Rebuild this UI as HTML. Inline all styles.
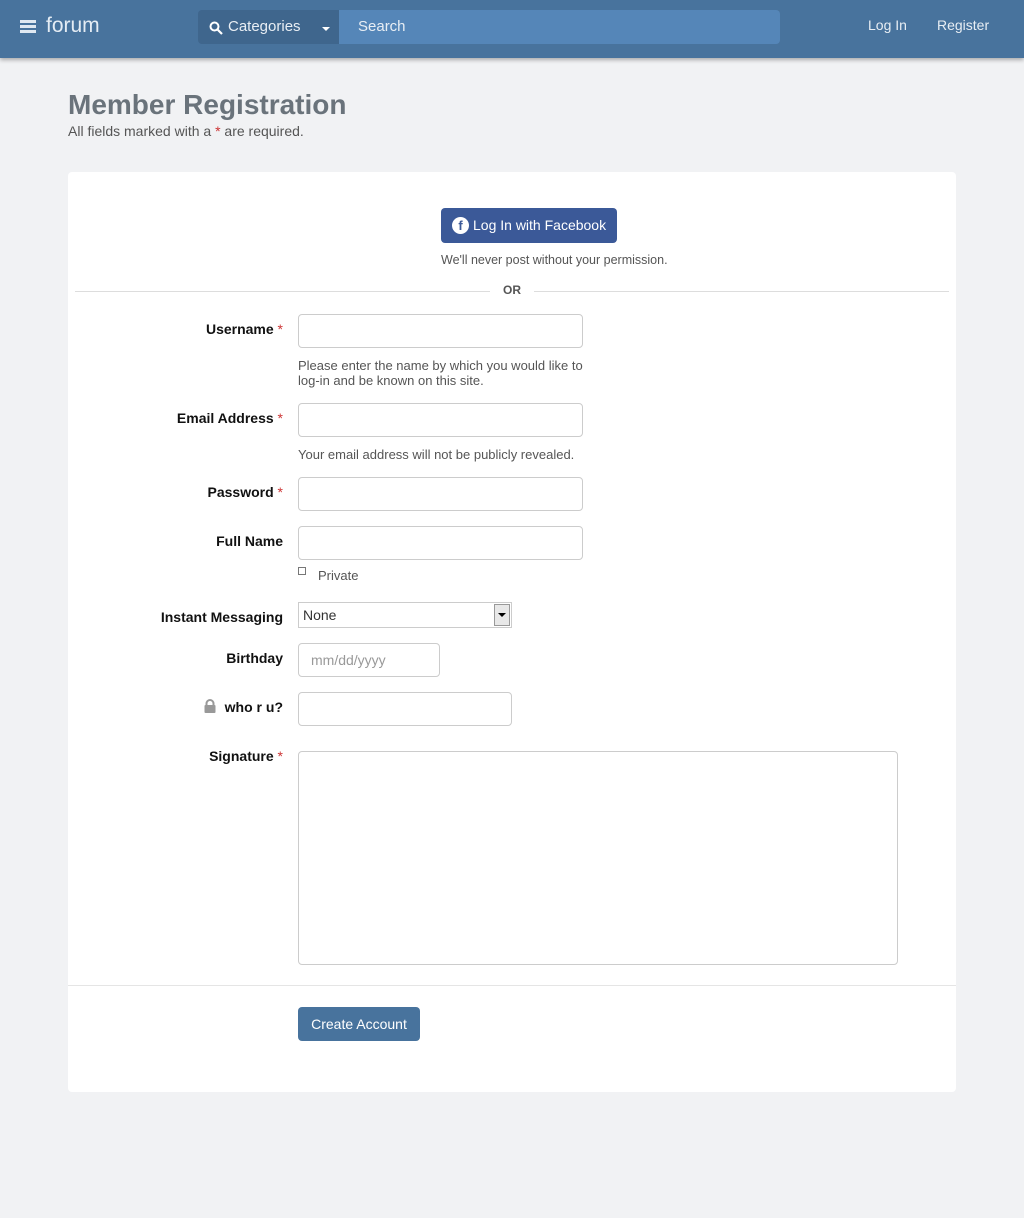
<!DOCTYPE html>
<html><head><style>
*{box-sizing:border-box;margin:0;padding:0}
body{width:1024px;height:1218px;background:#f1f2f4;font-family:"Liberation Sans",sans-serif;position:relative;overflow:hidden}
.nav{position:absolute;left:0;top:0;width:1024px;height:58px;background:#48739d;box-shadow:0 2px 4px rgba(0,0,0,.3)}
.abs{position:absolute}
.lbl{position:absolute;right:741px;font-size:14px;font-weight:bold;color:#111;text-align:right;white-space:nowrap}
.req{color:#c33;font-weight:normal}
.inp{position:absolute;left:298px;height:34px;background:#fff;border:1px solid #ccc;border-radius:4px}
.hint{position:absolute;left:298px;font-size:13px;color:#555;line-height:15px}
</style></head><body>
<div class="nav">
 <div class="abs" style="left:20px;top:20px;width:16px;height:3px;background:#dfe8f1;box-shadow:0 5px 0 #dfe8f1,0 10px 0 #dfe8f1"></div>
 <div class="abs" style="left:46px;top:14px;font-size:21px;color:#e4ecf4">forum</div>
 <div class="abs" style="left:198px;top:10px;width:141px;height:34px;background:#3f668d;border-radius:4px 0 0 4px"></div>
 <svg class="abs" style="left:209px;top:21px" width="14" height="14"><circle cx="5.5" cy="5.5" r="4" stroke="#fff" stroke-width="2" fill="none"/><path d="M8.5 8.5L13 13" stroke="#fff" stroke-width="2.2"/></svg>
 <div class="abs" style="left:228px;top:18px;font-size:15px;color:#e8eef4">Categories</div>
 <div class="abs" style="left:322px;top:27px;border:4px solid transparent;border-top-color:#fff;border-bottom:0"></div>
 <div class="abs" style="left:339px;top:10px;width:441px;height:34px;background:#5586b8;border-radius:0 4px 4px 0"></div>
 <div class="abs" style="left:358px;top:18px;font-size:15px;color:#e8eef4">Search</div>
 <div class="abs" style="left:868px;top:17px;font-size:14px;color:#e8eef4">Log In</div>
 <div class="abs" style="left:937px;top:17px;font-size:14px;color:#e8eef4">Register</div>
</div>
<div class="abs" style="left:68px;top:89px;font-size:28px;font-weight:bold;color:#6a737b">Member Registration</div>
<div class="abs" style="left:68px;top:123px;font-size:14px;color:#555">All fields marked with a <span style="color:#c33">*</span> are required.</div>
<div class="abs" style="left:68px;top:172px;width:888px;height:920px;background:#fff;border-radius:4px"></div>
<div class="abs" style="left:441px;top:208px;width:176px;height:35px;background:#3b5998;border-radius:4px;color:#fff;font-size:14px;line-height:35px;padding-left:32px">Log In with Facebook</div>
<div class="abs" style="left:452px;top:217px;width:17px;height:17px;border-radius:50%;background:#fff;color:#3b5998;font-weight:bold;font-size:13px;text-align:center;line-height:18px">f</div>
<div class="abs" style="left:441px;top:253px;font-size:12.5px;color:#555">We'll never post without your permission.</div>
<div class="abs" style="left:75px;top:291px;width:874px;height:1px;background:#ddd"></div>
<div class="abs" style="left:490px;top:283px;width:44px;background:#fff;text-align:center;font-size:12px;font-weight:bold;color:#555">OR</div>
<div class="lbl" style="top:321px">Username <span class="req">*</span></div>
<div class="inp" style="top:314px;width:285px"></div>
<div class="hint" style="top:358px">Please enter the name by which you would like to<br>log-in and be known on this site.</div>
<div class="lbl" style="top:410px">Email Address <span class="req">*</span></div>
<div class="inp" style="top:403px;width:285px"></div>
<div class="hint" style="top:447px">Your email address will not be publicly revealed.</div>
<div class="lbl" style="top:484px">Password <span class="req">*</span></div>
<div class="inp" style="top:477px;width:285px"></div>
<div class="lbl" style="top:533px">Full Name</div>
<div class="inp" style="top:526px;width:285px"></div>
<div class="abs" style="left:298px;top:567px;width:8px;height:8px;border:1px solid #777"></div>
<div class="hint" style="left:318px;top:568px">Private</div>
<div class="lbl" style="top:609px">Instant Messaging</div>
<div class="abs" style="left:298px;top:602px;width:214px;height:26px;border:1px solid #ccc;background:#fff;font-size:14px;color:#333;padding:4px 4px">None</div>
<div class="abs" style="left:494px;top:604px;width:16px;height:22px;background:#e8e8e8;border:1px solid #999"></div>
<div class="abs" style="left:498px;top:613px;border:4px solid transparent;border-top-color:#000;border-bottom:0"></div>
<div class="lbl" style="top:650px">Birthday</div>
<div class="inp" style="top:643px;width:142px;font-size:14px;color:#999;padding:8px 12px">mm/dd/yyyy</div>
<svg class="abs" style="left:203px;top:699px" width="14" height="14"><path d="M3.5 6V4.5a3.5 3.5 0 0 1 7 0V6" stroke="#999" stroke-width="2" fill="none"/><rect x="1.5" y="6" width="11" height="8" rx="1" fill="#999"/></svg>
<div class="lbl" style="top:699px">who r u?</div>
<div class="inp" style="top:692px;width:214px"></div>
<div class="lbl" style="top:748px">Signature <span class="req">*</span></div>
<div class="inp" style="top:751px;width:600px;height:214px"></div>
<div class="abs" style="left:68px;top:985px;width:888px;height:1px;background:#e5e5e5"></div>
<div class="abs" style="left:298px;top:1007px;width:122px;height:34px;background:#48739d;border-radius:4px;color:#fff;font-size:14px;text-align:center;line-height:34px">Create Account</div>
</body></html>
